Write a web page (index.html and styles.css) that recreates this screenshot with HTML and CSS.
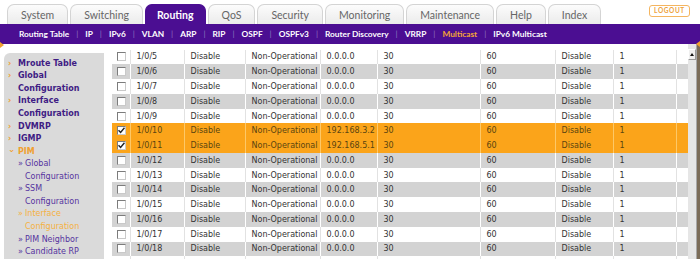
FILE: index.html
```html
<!DOCTYPE html>
<html lang="en">
<head>
    <meta charset="UTF-8">
    <title>PIM Interface Configuration</title>
    <link rel="stylesheet" href="styles.css">
</head>
<body>
    <div class="tabs">
        <div class="tab">System</div>
        <div class="tab">Switching</div>
        <div class="tab active">Routing</div>
        <div class="tab">QoS</div>
        <div class="tab">Security</div>
        <div class="tab">Monitoring</div>
        <div class="tab">Maintenance</div>
        <div class="tab">Help</div>
        <div class="tab">Index</div>
        <a href="#" class="logout">LOGOUT</a>
    </div>
    <div class="subnav">
        <span>Routing Table</span><span class="sep">|</span>
        <span>IP</span><span class="sep">|</span>
        <span>IPv6</span><span class="sep">|</span>
        <span>VLAN</span><span class="sep">|</span>
        <span>ARP</span><span class="sep">|</span>
        <span>RIP</span><span class="sep">|</span>
        <span>OSPF</span><span class="sep">|</span>
        <span>OSPFv3</span><span class="sep">|</span>
        <span>Router Discovery</span><span class="sep">|</span>
        <span>VRRP</span><span class="sep">|</span>
        <span class="current">Multicast</span><span class="sep">|</span>
        <span>IPv6 Multicast</span>
    </div>

    <div class="main">
        <ul class="sidenav">
            <li class="top"><span class="bul">&rsaquo;</span>Mroute Table</li>
            <li class="top"><span class="bul">&rsaquo;</span>Global<br>Configuration</li>
            <li class="top"><span class="bul">&rsaquo;</span>Interface<br>Configuration</li>
            <li class="top"><span class="bul">&rsaquo;</span>DVMRP</li>
            <li class="top"><span class="bul">&rsaquo;</span>IGMP</li>
            <li class="top open"><span class="bul down">&rsaquo;</span>PIM</li>
            <li class="sub"><span class="bul">&raquo;</span>Global<br>Configuration</li>
            <li class="sub"><span class="bul">&raquo;</span>SSM<br>Configuration</li>
            <li class="sub current"><span class="bul">&raquo;</span>Interface<br>Configuration</li>
            <li class="sub"><span class="bul">&raquo;</span>PIM Neighbor</li>
            <li class="sub"><span class="bul">&raquo;</span>Candidate RP<br>Configuration</li>
        </ul>

        <div class="grid-wrap">
            <table class="grid">
                <colgroup>
                    <col style="width:18px"><col style="width:54px"><col style="width:61px">
                    <col style="width:75px"><col style="width:57px"><col style="width:103px">
                    <col style="width:75px"><col style="width:58px"><col style="width:63px">
                    <col style="width:12px">
                </colgroup>
                <tbody id="grid-body"></tbody>
            </table>
        </div>

        <div class="scrollbar">
            <span class="sb-up"></span>
        </div>
    </div>

    <script>
        const selected = { 10: '192.168.3.2', 11: '192.168.5.1' };
        const body = document.getElementById('grid-body');

        for (let port = 5; port <= 18; port++) {
            const row = document.createElement('tr');
            if (selected[port]) {
                row.className = 'sel';
            } else if (port % 2 === 0) {
                row.className = 'alt';
            }
            const ip = selected[port] || '0.0.0.0';
            const box = selected[port]
                ? '<span class="cb"><svg width="7" height="7" viewBox="0 0 7 7"><path d="M0.5 3.2 L2.6 5.4 L6.5 0.8" fill="none" stroke="#222" stroke-width="1.5"/></svg></span>'
                : '<span class="cb"></span>';
            row.innerHTML = `
                <td class="c-box">${box}</td>
                <td>1/0/${port}</td>
                <td>Disable</td>
                <td>Non-Operational</td>
                <td>${ip}</td>
                <td>30</td>
                <td>60</td>
                <td>Disable</td>
                <td>1</td>
                <td></td>
            `;
            body.appendChild(row);
        }

        // next row is scrolled just below the fold, only its top edge shows
        const tail = document.createElement('tr');
        tail.innerHTML = '<td></td>'.repeat(10);
        body.appendChild(tail);
    </script>
</body>
</html>
```

FILE: styles.css
```css
:root {
    --purple: #4b0e92;
    --orange: #fba41a;
    --nav-text: #3f1c84;
    --row-alt: #d3d3d3;
    --text-color: #333;
}

body {
    margin: 0;
    width: 700px;
    height: 259px;
    overflow: hidden;
    background: #fff;
    font-family: "DejaVu Sans", Verdana, sans-serif;
    color: var(--text-color);
}

.tabs {
    display: flex;
    align-items: flex-end;
    gap: 2px;
    height: 24px;
    padding-left: 7px;
}

.tab {
    box-sizing: border-box;
    height: 20px;
    padding: 0 13px;
    line-height: 20px;
    font-family: Lato, sans-serif;
    font-size: 10.5px;
    color: #666;
    background: linear-gradient(to bottom, #fcfcfc, #ebebeb);
    border: 1px solid #d4d4d4;
    border-bottom: none;
    border-radius: 7px 7px 0 0;
}

.tab.active {
    padding: 0 11px;
    background: var(--purple);
    border-color: var(--purple);
    color: #fff;
    font-weight: bold;
}

.logout {
    align-self: flex-start;
    margin: 5px 10px 0 auto;
    box-sizing: border-box;
    width: 41px;
    height: 12px;
    line-height: 10px;
    text-align: center;
    border: 1px solid #f4b560;
    border-radius: 3px;
    font-family: Lato, sans-serif;
    font-size: 6.5px;
    font-weight: bold;
    letter-spacing: 0.6px;
    color: #eea23c;
    text-decoration: none;
}

.subnav {
    display: flex;
    align-items: center;
    gap: 7px;
    height: 20px;
    padding-left: 19px;
    background: var(--purple);
    font-family: Lato, sans-serif;
    font-size: 8.3px;
    font-weight: bold;
    color: #fff;
}

.subnav .sep {
    font-weight: normal;
    color: #8d76bf;
}

.subnav .current {
    color: #f4a536;
}

.main {
    display: flex;
    position: relative;
    height: 215px;
    border-right: 3px solid #7b6c58;
}

.main::before {
    content: "";
    position: absolute;
    left: 0;
    top: -2px;
    border-left: 4px solid #f0a030;
    border-top: 3px solid transparent;
    border-bottom: 3px solid transparent;
}

.main::after {
    content: "";
    position: absolute;
    right: -3px;
    top: -3px;
    border-right: 4px solid #f0a030;
    border-top: 3px solid transparent;
    border-bottom: 3px solid transparent;
}

.sidenav {
    width: 100px;
    margin: 8.7px 8px 0 4px;
    padding: 5px 0 0;
    list-style: none;
    background: #dadada;
    border-radius: 6px 0 0 0;
    font-size: 8px;
    line-height: 12.57px;
}

.sidenav li {
    padding-left: 14px;
    text-indent: -10px;
}

.sidenav .bul {
    display: inline-block;
    width: 10px;
    text-indent: 0;
    color: #f0a030;
}

.sidenav .bul.down {
    width: 6px;
    margin-right: 4px;
    transform: rotate(90deg);
}

.sidenav .top {
    font-weight: bold;
    color: var(--nav-text);
}

.sidenav .top.open {
    color: #f0a030;
}

.sidenav .sub {
    padding-left: 21px;
    text-indent: -7px;
    color: #55339f;
}

.sidenav .sub .bul {
    width: 7px;
    color: #55339f;
}

.sidenav .sub.current,
.sidenav .sub.current .bul {
    color: #f5b142;
}

.grid-wrap {
    flex: 1;
    padding-top: 5.6px;
    overflow: hidden;
}

.grid {
    width: 576px;
    table-layout: fixed;
    border-collapse: collapse;
    font-size: 8px;
}

.grid tr {
    height: 14.77px;
    background: #fff;
}

.grid tr.alt {
    background: var(--row-alt);
}

.grid tr.sel {
    background: var(--orange);
    color: #5a4410;
}

.grid td {
    padding: 0 0 0 6px;
    white-space: nowrap;
    overflow: hidden;
    border-right: 1px solid #e2e2e2;
}

.grid tr.alt td {
    border-right-color: #fff;
}

.grid tr.sel td {
    border-right-color: #fdc867;
}

.grid td.c-box {
    padding-left: 5px;
    line-height: 0;
}

.cb {
    display: inline-block;
    box-sizing: border-box;
    width: 9px;
    height: 9px;
    background: #fff;
    border: 1px solid;
    border-color: #7c7c7c #c9c9c9 #c9c9c9 #7c7c7c;
}

.cb svg {
    display: block;
}

.scrollbar {
    width: 9px;
    padding-top: 5px;
    background: #e6e6e6;
    border-right: 1px solid #a8a8a8;
    box-sizing: border-box;
}

.sb-up {
    display: block;
    box-sizing: border-box;
    width: 8px;
    height: 11px;
    background: #efefef;
    border: 1px solid;
    border-color: #fff #9a9a9a #9a9a9a #fff;
    position: relative;
}

.sb-up::after {
    content: "";
    position: absolute;
    left: 1px;
    top: 3px;
    border-bottom: 3px solid #111;
    border-left: 2px solid transparent;
    border-right: 2px solid transparent;
}
```
